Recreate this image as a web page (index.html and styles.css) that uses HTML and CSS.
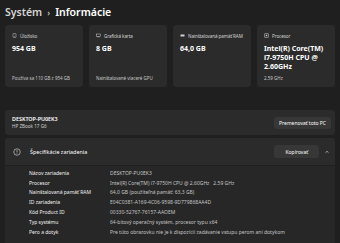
FILE: index.html
```html
<!DOCTYPE html>
<html lang="sk">
<head>
    <meta charset="UTF-8">
    <meta name="viewport" content="width=device-width, initial-scale=1.0">
    <title>Systém › Informácie</title>
    <link rel="stylesheet" href="styles.css">
</head>
<body>
<div class="page">
    <div class="title">
        <span class="crumb">Systém</span>
        <span class="sep">›</span>
        <span class="current">Informácie</span>
    </div>

    <div class="cards">
        <div class="card">
            <div class="card-label">
                <svg class="ico" viewBox="0 0 10 10"><rect x="2" y="1" width="6" height="8" rx="1" fill="none" stroke="#cfcfcf" stroke-width="1"/><circle cx="5" cy="6.5" r="0.8" fill="#cfcfcf"/></svg>
                Úložisko
            </div>
            <div class="card-value">954 GB</div>
            <div class="card-foot">Používa sa 110 GB z 954 GB</div>
        </div>
        <div class="card">
            <div class="card-label">
                <svg class="ico" viewBox="0 0 10 10"><rect x="1" y="2" width="8" height="5" fill="none" stroke="#cfcfcf" stroke-width="1"/><rect x="3" y="7.5" width="4" height="1" fill="#cfcfcf"/></svg>
                Grafická karta
            </div>
            <div class="card-value">8 GB</div>
            <div class="card-foot">Nainštalované viaceré GPU</div>
        </div>
        <div class="card">
            <div class="card-label">
                <svg class="ico" viewBox="0 0 10 10"><rect x="1" y="3" width="8" height="4" fill="#cfcfcf"/></svg>
                Nainštalovaná pamäť RAM
            </div>
            <div class="card-value">64,0 GB</div>
        </div>
        <div class="card">
            <div class="card-label">
                <svg class="ico" viewBox="0 0 10 10"><rect x="1.5" y="1.5" width="7" height="7" fill="none" stroke="#cfcfcf" stroke-width="1"/><rect x="3.5" y="3.5" width="3" height="3" fill="#cfcfcf"/></svg>
                Procesor
            </div>
            <div class="card-value">Intel(R) Core(TM) i7-9750H CPU @ 2.60GHz</div>
            <div class="card-foot">2.59 GHz</div>
        </div>
    </div>

    <div class="device">
        <div class="device-name">
            <div class="host">DESKTOP-PU0EK3</div>
            <div class="model">HP ZBook 17 G6</div>
        </div>
        <button class="btn">Premenovať toto PC</button>
    </div>

    <div class="specs">
        <div class="specs-head">
            <svg class="info" viewBox="0 0 16 16"><circle cx="8" cy="8" r="6.5" fill="none" stroke="#e0e0e0" stroke-width="1.2"/><rect x="7.4" y="4" width="1.2" height="5" fill="#e0e0e0"/><rect x="7.4" y="10.4" width="1.2" height="1.2" fill="#e0e0e0"/></svg>
            <span class="specs-title">Špecifikácie zariadenia</span>
            <button class="btn btn-copy">Kopírovať</button>
            <svg class="chev" viewBox="0 0 10 10"><path d="M2.5 6.2 L5 3.8 L7.5 6.2" fill="none" stroke="#d0d0d0" stroke-width="1.2"/></svg>
        </div>
        <div class="specs-body">
            <div class="row"><span class="key">Názov zariadenia</span><span class="val">DESKTOP-PU0EK3</span></div>
            <div class="row"><span class="key">Procesor</span><span class="val">Intel(R) Core(TM) i7-9750H CPU @ 2.60GHz&nbsp;&nbsp;&nbsp;2.59 GHz</span></div>
            <div class="row"><span class="key">Nainštalovaná pamäť RAM</span><span class="val">64,0 GB (použiteľná pamäť: 63,3 GB)</span></div>
            <div class="row"><span class="key">ID zariadenia</span><span class="val">E04C0381-A169-4C06-9598-9D779868AA4D</span></div>
            <div class="row"><span class="key">Kód Product ID</span><span class="val">00330-52767-76157-AAOEM</span></div>
            <div class="row"><span class="key">Typ systému</span><span class="val">64-bitový operačný systém, procesor typu x64</span></div>
            <div class="row"><span class="key">Pero a dotyk</span><span class="val">Pre túto obrazovku nie je k dispozícii zadávanie vstupu perom ani dotykom</span></div>
        </div>
    </div>
</div>
</body>
</html>
```

FILE: styles.css
```css
body {
    margin: 0;
    background-color: #1f1f1f;
    color: #fff;
    font-family: "Noto Sans", "Open Sans", sans-serif;
    overflow: hidden;
}

.page {
    padding: 3px 5px 0;
}

.title {
    display: flex;
    align-items: baseline;
    gap: 5px;
    font-size: 10.5px;
    font-weight: 600;
    line-height: 18px;
}

.crumb {
    color: #d6d6d6;
}

.sep {
    font-size: 8.5px;
    color: #bdbdbd;
}

.cards {
    display: grid;
    grid-template-columns: repeat(4, 1fr);
    gap: 6px;
    margin-top: 3px;
}

.card {
    background-color: #2b2b2b;
    border-radius: 3px;
    height: 62px;
    box-sizing: border-box;
    padding: 7px 7px 0;
    display: flex;
    flex-direction: column;
}

.card-label {
    display: flex;
    align-items: center;
    gap: 3px;
    font-size: 4.6px;
    letter-spacing: -0.1px;
    color: #d4d4d4;
    height: 7px;
    white-space: nowrap;
}

.ico {
    width: 5px;
    height: 5px;
    flex: none;
}

.card-value {
    margin-top: 5px;
    font-size: 7px;
    font-weight: 700;
    line-height: 9px;
}

.card-foot {
    margin-top: auto;
    margin-bottom: 6px;
    font-size: 4.5px;
    color: #c8c8c8;
}

.device {
    margin-top: 23px;
    background-color: #2b2b2b;
    border-radius: 3px;
    height: 25px;
    display: flex;
    align-items: center;
    justify-content: space-between;
    padding: 0 4px 0 7px;
}

.host {
    font-size: 5.4px;
    font-weight: 600;
    line-height: 7px;
}

.model {
    font-size: 4.6px;
    color: #d0d0d0;
    line-height: 6px;
}

.btn {
    background-color: #373737;
    border: 0;
    border-radius: 3px;
    color: #fff;
    font-family: inherit;
    font-size: 5px;
    height: 12px;
    padding: 0 5px;
}

.specs {
    margin-top: 3px;
    background-color: #2b2b2b;
    border-radius: 3px 3px 0 0;
}

.specs-head {
    display: flex;
    align-items: center;
    height: 27px;
    padding: 0 5px 0 8px;
    border-bottom: 1px solid #1f1f1f;
}

.info {
    width: 8px;
    height: 8px;
}

.specs-title {
    margin-left: 9px;
    font-size: 5.4px;
    flex: 1;
}

.btn-copy {
    height: 13px;
    padding: 0 11px;
    margin-right: 5px;
}

.chev {
    width: 6px;
    height: 6px;
}

.specs-body {
    padding: 2px 0 7px 24px;
    background-color: #272727;
}

.row {
    display: flex;
    height: 9.8px;
    align-items: center;
    font-size: 5px;
}

.key {
    width: 81px;
    color: #f2f2f2;
}

.val {
    color: #c4c4c4;
    white-space: nowrap;
}
```
